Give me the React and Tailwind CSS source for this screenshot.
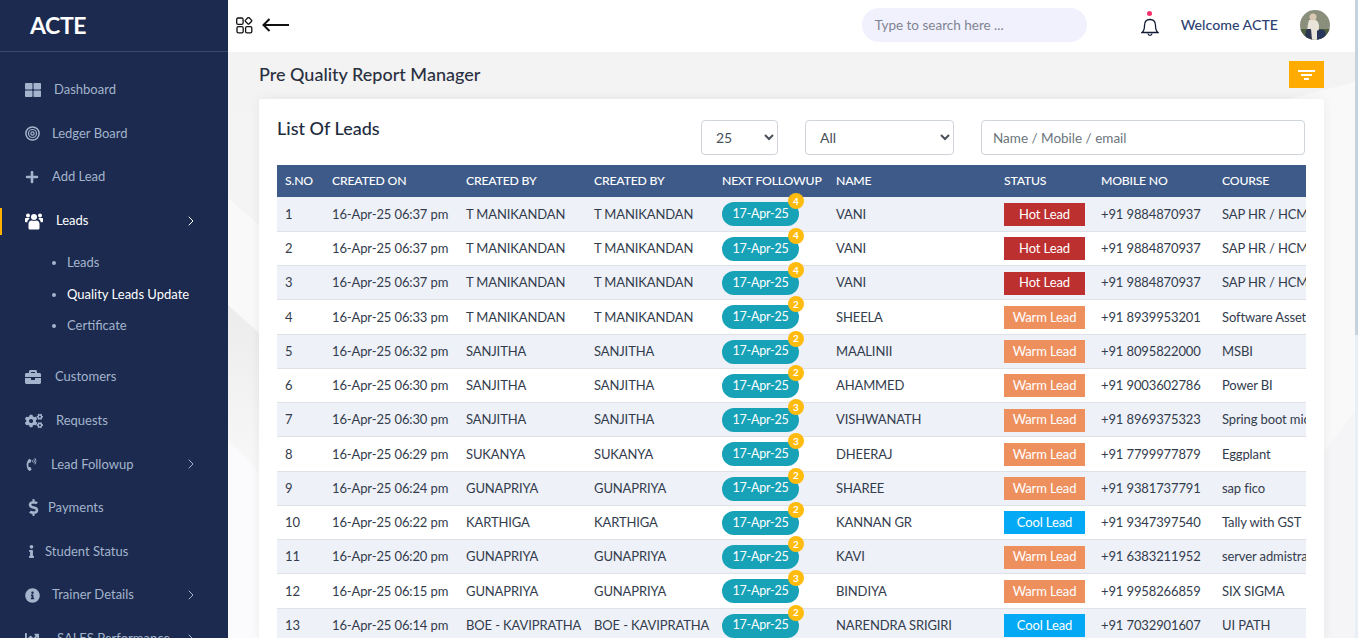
import { ChevronRight } from 'lucide-react';
import { FaThLarge, FaPlus, FaBriefcase, FaCogs, FaPhoneVolume, FaDollarSign, FaInfo, FaInfoCircle, FaChartLine } from 'react-icons/fa';

const leads = [
  ['16-Apr-25 06:37 pm', 'T MANIKANDAN', 'T MANIKANDAN', 4, 'VANI', 'Hot Lead', '+91 9884870937', 'SAP HR / HCM'],
  ['16-Apr-25 06:37 pm', 'T MANIKANDAN', 'T MANIKANDAN', 4, 'VANI', 'Hot Lead', '+91 9884870937', 'SAP HR / HCM'],
  ['16-Apr-25 06:37 pm', 'T MANIKANDAN', 'T MANIKANDAN', 4, 'VANI', 'Hot Lead', '+91 9884870937', 'SAP HR / HCM'],
  ['16-Apr-25 06:33 pm', 'T MANIKANDAN', 'T MANIKANDAN', 2, 'SHEELA', 'Warm Lead', '+91 8939953201', 'Software Asset Management'],
  ['16-Apr-25 06:32 pm', 'SANJITHA', 'SANJITHA', 2, 'MAALINII', 'Warm Lead', '+91 8095822000', 'MSBI'],
  ['16-Apr-25 06:30 pm', 'SANJITHA', 'SANJITHA', 2, 'AHAMMED', 'Warm Lead', '+91 9003602786', 'Power BI'],
  ['16-Apr-25 06:30 pm', 'SANJITHA', 'SANJITHA', 3, 'VISHWANATH', 'Warm Lead', '+91 8969375323', 'Spring boot microservices'],
  ['16-Apr-25 06:29 pm', 'SUKANYA', 'SUKANYA', 3, 'DHEERAJ', 'Warm Lead', '+91 7799977879', 'Eggplant'],
  ['16-Apr-25 06:24 pm', 'GUNAPRIYA', 'GUNAPRIYA', 2, 'SHAREE', 'Warm Lead', '+91 9381737791', 'sap fico'],
  ['16-Apr-25 06:22 pm', 'KARTHIGA', 'KARTHIGA', 2, 'KANNAN GR', 'Cool Lead', '+91 9347397540', 'Tally with GST'],
  ['16-Apr-25 06:20 pm', 'GUNAPRIYA', 'GUNAPRIYA', 2, 'KAVI', 'Warm Lead', '+91 6383211952', 'server admistration'],
  ['16-Apr-25 06:15 pm', 'GUNAPRIYA', 'GUNAPRIYA', 3, 'BINDIYA', 'Warm Lead', '+91 9958266859', 'SIX SIGMA'],
  ['16-Apr-25 06:14 pm', 'BOE - KAVIPRATHA', 'BOE - KAVIPRATHA', 2, 'NARENDRA SRIGIRI', 'Cool Lead', '+91 7032901607', 'UI PATH'],
];

const statusColors = {
  'Hot Lead': 'bg-[#bd3030]',
  'Warm Lead': 'bg-[#ee8f5e]',
  'Cool Lead': 'bg-[#03a9f4]',
};

const TargetIcon = () => (
  <svg width="15" height="15" viewBox="0 0 15 15" fill="none" stroke="currentColor">
    <circle cx="7.5" cy="7.5" r="6.6" strokeWidth="1.5" />
    <circle cx="7.5" cy="7.5" r="4" strokeWidth="1.2" />
    <circle cx="7.5" cy="7.5" r="1.6" strokeWidth="1.2" />
  </svg>
);

const UsersIcon = () => (
  <svg width="18" height="18" viewBox="0 0 18 18" fill="currentColor">
    <circle cx="3" cy="3.5" r="2" />
    <circle cx="15" cy="3.5" r="2" />
    <circle cx="9" cy="5" r="3" />
    <path d="M0 6.800c0-.5.5-.8 1-.8h3l.6 1c-1.400.6-2.200 1.800-2.300 3.200H1c-.6 0-1-.4-1-1ZM18 6.800c0-.5-.5-.8-1-.8h-3l-.6 1c1.400.6 2.200 1.800 2.300 3.200H17c.6 0 1-.4 1-1Z" />
    <path d="M3.500 12c0-2 1.500-3.500 3-3.500.8.500 4.200.5 5 0 1.500 0 3 1.500 3 3.500v4c0 1-.8 1.500-1.500 1.500H5c-.7 0-1.500-.5-1.500-1.500Z" />
  </svg>
);

const NavItem = ({ icon, label, gap, arrow, active }) => (
  <div className={`relative flex h-[43.6px] shrink-0 items-center pl-[25px] pr-[29px] text-[13px] ${active ? 'text-white' : 'text-[#a3b4cc]'}`}>
    {active && <span className="absolute left-0 top-[9px] h-[27px] w-[2px] bg-[#ffb100]" />}
    <span className={`flex items-center ${gap}`}>{icon}</span>
    <span>{label}</span>
    {arrow && <ChevronRight size={16} strokeWidth={1.5} className="ml-auto" />}
  </div>
);

const SubItem = ({ label, active }) => (
  <div className={`flex h-[31.5px] items-center pl-[52px] text-[13px] ${active ? 'text-white' : 'text-[#a3b4cc]'}`}>
    <span className="mr-[11px] h-[4px] w-[4px] rounded-full bg-[#a3b4cc]" />
    {label}
  </div>
);

const Sidebar = () => (
  <aside className="flex h-[638px] w-[228px] shrink-0 flex-col overflow-hidden bg-[#1b2a4e]">
    <div className="flex h-[52px] shrink-0 items-center border-b border-[#3d4b6b] pl-[30px] text-[23px] font-bold tracking-[-0.4px] text-white">ACTE</div>
    <div className="flex flex-col pt-[16px]">
      <NavItem icon={<FaThLarge size={16} />} label="Dashboard" gap="w-[29px]" />
      <NavItem icon={<TargetIcon />} label="Ledger Board" gap="w-[27px]" />
      <NavItem icon={<FaPlus size={14} />} label="Add Lead" gap="w-[27px]" />
      <NavItem icon={<UsersIcon />} label="Leads" gap="w-[31px]" arrow active />
      <div className="flex h-[113px] flex-col pt-[5px]">
        <SubItem label="Leads" />
        <SubItem label="Quality Leads Update" active />
        <SubItem label="Certificate" />
      </div>
      <NavItem icon={<FaBriefcase size={16} />} label="Customers" gap="w-[30px]" />
      <NavItem icon={<FaCogs size={18} />} label="Requests" gap="w-[31px]" />
      <NavItem icon={<FaPhoneVolume size={13} />} label="Lead Followup" gap="w-[26px]" arrow />
      <NavItem icon={<FaDollarSign size={17} />} label="Payments" gap="w-[23px]" />
      <NavItem icon={<FaInfo size={13} />} label="Student Status" gap="w-[20px]" />
      <NavItem icon={<FaInfoCircle size={15} />} label="Trainer Details" gap="w-[27px]" arrow />
      <NavItem icon={<FaChartLine size={15} />} label="SALES Performance" gap="w-[32px]" arrow />
    </div>
  </aside>
);

const Header = () => (
  <header className="flex h-[52px] shrink-0 items-center bg-white pb-[2px] pl-[8px] pr-[25px]">
    <svg width="17" height="17" viewBox="0 0 17 17" fill="none" stroke="#111" strokeWidth="1.3">
      <rect x="0.7" y="1" width="6.4" height="6.4" rx="1.4" />
      <rect x="1" y="9.6" width="6.2" height="6.2" rx="1.4" />
      <rect x="9.6" y="9.6" width="6.2" height="6.2" rx="1.4" />
      <rect x="9.9" y="1.2" width="5.2" height="5.2" rx="1" transform="rotate(45 12.5 3.8)" />
    </svg>
    <svg width="28" height="14" viewBox="0 0 28 14" fill="none" stroke="#111" strokeWidth="2" className="ml-[9px]">
      <path d="M27 7H1.500M7.500 1 1.500 7l6 6" />
    </svg>
    <div className="ml-auto flex h-[34px] w-[225px] items-center rounded-full bg-[#f0f1fd] pl-[13px] text-[13.5px] text-[#7f8491]">Type to search here ...</div>
    <div className="relative ml-[54px] h-[24px] w-[18px] text-[#111b33]">
      <svg width="18" height="23" viewBox="0 0 18 23" fill="none" stroke="currentColor" strokeWidth="1.3" className="mt-[2px]">
        <path d="M1 17.500c2-1.500 2.500-3 2.500-7 0-3.500 2-6 5.500-6s5.500 2.500 5.500 6c0 4 .5 5.500 2.500 7Z" />
        <path d="M7 18.500c.3 2.500 3.700 2.500 4 0" />
      </svg>
      <span className="absolute left-[6.5px] top-[-2px] h-[5px] w-[5px] rounded-full bg-[#f5306a]" />
    </div>
    <span className="ml-[22px] text-[14.2px] font-medium text-[#2e4172]">Welcome ACTE</span>
    <div className="ml-[22px] h-[30px] w-[30px] overflow-hidden rounded-full">
      <svg width="30" height="30" viewBox="0 0 30 30">
        <rect width="30" height="30" fill="#8a8f7c" />
        <rect y="19" width="30" height="11" fill="#4f6040" />
        <circle cx="13" cy="7" r="3.5" fill="#d9c9b2" />
        <path d="M9 10c-2 6-2 12-1 20h10l1-14c0-3-2-6-4-6Z" fill="#e8e4da" />
        <path d="M7 19c-2 3-2 7-1 11h6l-1-11Z" fill="#2e3550" />
        <path d="M17 21c2-2 6-2 8 0 1 3 1 6 0 9h-8Z" fill="#27365a" />
      </svg>
    </div>
  </header>
);

// faint polygons of the page background, seen in the gutters round the card
const PageBackground = () => (
  <svg className="absolute inset-0" width="1127" height="586" viewBox="0 0 1127 586" preserveAspectRatio="none">
    <defs>
      <linearGradient id="band" x1="0" y1="0" x2="0" y2="1">
        <stop offset="0" stopColor="#ececed" />
        <stop offset="1" stopColor="#f8f8f9" />
      </linearGradient>
    </defs>
    <rect width="1127" height="586" fill="#f9f9fa" />
    <polygon points="0,0 1127,0 1127,30 1010,60 0,60" fill="#f3f3f4" />
    <polygon points="0,60 31,60 31,173 0,146" fill="#f4f4f5" />
    <polygon points="0,253 31,281 31,421 0,388" fill="url(#band)" />
    <polygon points="0,388 31,421 31,586 0,586" fill="#fbfbfd" />
    <polygon points="1096,400 1127,360 1127,586 1096,586" fill="#f5f5f7" />
  </svg>
);

const LeadRow = ({ no, lead }) => {
  const [created, by, by2, count, name, status, mobile, course] = lead;
  return (
    <tr className={`h-[34.25px] border-b border-[#dee2e6] ${no % 2 ? 'bg-[#eef1f8]' : 'bg-white'}`}>
      <td className="pl-[8px] pt-[1px]">{no}</td>
      <td className="whitespace-nowrap pl-[8px] pt-[1px]">{created}</td>
      <td className="whitespace-nowrap pl-[8px] pt-[1px]">{by}</td>
      <td className="whitespace-nowrap pl-[8px] pt-[1px]">{by2}</td>
      <td className="pl-[8px] pt-[1px]">
        <span className="relative flex h-[24px] w-[77px] items-center justify-center rounded-full bg-[#17a2b8] text-[12.5px] tracking-[-0.2px] text-white">
          17-Apr-25
          <span className="absolute right-[-5px] top-[-9px] flex h-[16px] w-[16px] items-center justify-center rounded-full bg-[#ffbb0e] text-[10px] font-bold tracking-normal">{count}</span>
        </span>
      </td>
      <td className="whitespace-nowrap pl-[8px] pt-[1px]">{name}</td>
      <td className="pl-[8px] pt-[1px]">
        <span className={`flex h-[23px] w-[81px] items-center justify-center text-white ${statusColors[status]}`}>{status}</span>
      </td>
      <td className="whitespace-nowrap pl-[8px] pt-[1px]">{mobile}</td>
      <td className="whitespace-nowrap pl-[8px] pt-[1px]">{course}</td>
    </tr>
  );
};

const LeadsCard = () => (
  <section className="rounded-[3px] bg-white px-[18px] pt-[20px] shadow-[0_0_12px_rgba(0,0,0,0.06)]">
    <div className="flex h-[46px] items-start">
      <h2 className="mt-[-1px] text-[18px] font-medium leading-[20px] text-[#212b3d]">List Of Leads</h2>
      <select defaultValue="25" className="ml-auto mt-[1px] h-[35px] w-[77px] rounded-[4px] border border-[#ced4da] bg-white pl-[10px] text-[14px] text-[#495057]">
        <option>25</option>
        <option>50</option>
      </select>
      <select className="ml-[27px] mt-[1px] h-[35px] w-[149px] rounded-[4px] border border-[#ced4da] bg-white pl-[10px] text-[14px] text-[#495057]">
        <option>All</option>
      </select>
      <input placeholder="Name / Mobile / email" className="ml-[27px] mr-[1px] mt-[1px] h-[35px] w-[324px] rounded-[4px] border border-[#ced4da] px-[11px] text-[13.5px] placeholder:text-[#6c757d]" />
    </div>
    <div className="overflow-hidden">
      <table className="w-[1229px] table-fixed border-collapse text-left text-[13px] tracking-[-0.12px] text-[#333c4d]">
        <colgroup>
          <col className="w-[47px]" />
          <col className="w-[134px]" />
          <col className="w-[128px]" />
          <col className="w-[128px]" />
          <col className="w-[114px]" />
          <col className="w-[168px]" />
          <col className="w-[97px]" />
          <col className="w-[121px]" />
          <col />
        </colgroup>
        <thead>
          <tr className="h-[32px] bg-[#3d5a89] text-[12.25px] tracking-[-0.2px] text-white">
            {['S.NO', 'CREATED ON', 'CREATED BY', 'CREATED BY', 'NEXT FOLLOWUP', 'NAME', 'STATUS', 'MOBILE NO', 'COURSE'].map((h, i) => (
              <th key={i} className="whitespace-nowrap pl-[8px] font-medium">{h}</th>
            ))}
          </tr>
        </thead>
        <tbody>
          {leads.map((lead, i) => <LeadRow key={i} no={i + 1} lead={lead} />)}
        </tbody>
      </table>
    </div>
  </section>
);

export default function App() {
  return (
    <div className="flex h-[638px] w-[1358px] overflow-hidden bg-white font-['Lato',sans-serif]">
      <Sidebar />
      <div className="flex min-w-0 flex-1 flex-col">
        <Header />
        <main className="relative h-[586px] overflow-hidden">
          <PageBackground />
          <div className="relative pl-[31px] pr-[31px]">
            <div className="flex h-[47px] items-center justify-between pb-[2px]">
              <h1 className="text-[18px] font-medium text-[#2a3040]">Pre Quality Report Manager</h1>
              <button className="flex h-[27px] w-[35px] flex-col items-center justify-center gap-[2px] bg-[#ffab00]">
                <span className="h-[2px] w-[17px] bg-white" />
                <span className="h-[2px] w-[11px] bg-white" />
                <span className="h-[2px] w-[5px] bg-white" />
              </button>
            </div>
            <LeadsCard />
          </div>
        </main>
      </div>
      {/* browser scrollbar strip */}
      <div className="flex w-[3px] shrink-0 flex-col bg-[#e8eff5]">
        <div className="h-[335px] bg-[#c5d3de]" />
      </div>
    </div>
  );
}
